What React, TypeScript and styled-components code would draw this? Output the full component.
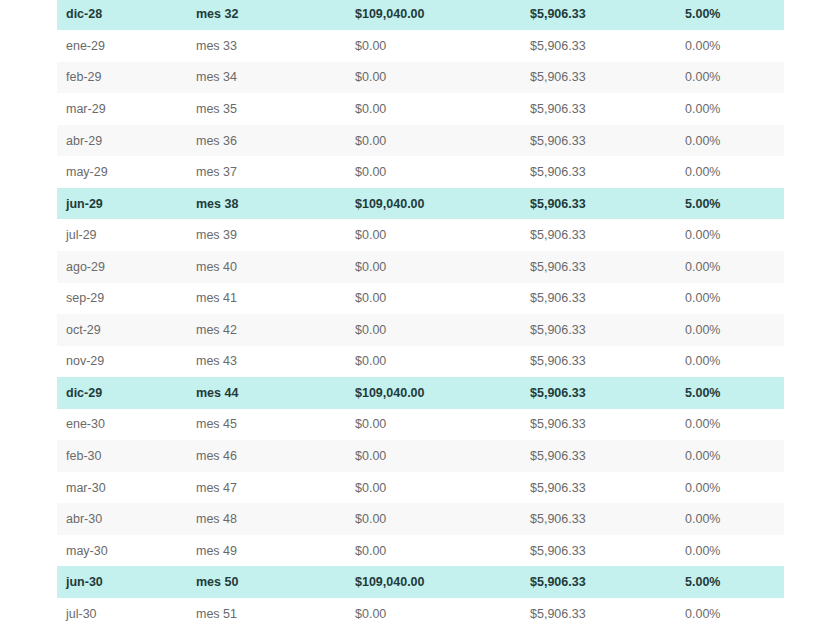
import { FC } from 'react';

import styled, { createGlobalStyle, css } from 'styled-components';

const GlobalStyle = createGlobalStyle`
  html, body {
    margin: 0;
    padding: 0;
    background: #ffffff;
  }

  body {
    font-family: 'Liberation Sans', Arial, sans-serif;
  }
`;

const StyledPage = styled.div`
  width: 840px;
  height: 630px;
  overflow: hidden;
  padding: 0 56px 0 57px;
  box-sizing: border-box;
`;

const StyledTable = styled.div`
  display: flex;
  flex-flow: column nowrap;
  margin-top: -1.4px;
`;

const StyledRow = styled.div<{ $highlight: boolean; $striped: boolean }>`
  ${({ $highlight, $striped }) => css`
    display: grid;
    grid-template-columns: 130px 159px 175px 155px 1fr;
    align-items: center;

    height: 31.56px;

    font-size: 12.5px;
    color: #6a6a6a;
    background-color: ${$striped ? '#f8f8f8' : '#ffffff'};

    ${$highlight &&
    css`
      font-weight: bold;
      color: #1f3b3a;
      background-color: #c4f0ed;
    `}
  `}
`;

const StyledCell = styled.div`
  padding-left: 9px;
  white-space: nowrap;
`;

interface IRow {
  date: string;
  month: number;
}

const months = ['ene', 'feb', 'mar', 'abr', 'may', 'jun', 'jul', 'ago', 'sep', 'oct', 'nov', 'dic'];

const rows: IRow[] = Array.from({ length: 20 }, (_, i) => {
  const index = 11 + i;
  const year = 28 + Math.floor(index / 12);
  return { date: `${months[index % 12]}-${year}`, month: 32 + i };
});

const App: FC = () => {
  return (
    <>
      <GlobalStyle />
      <StyledPage>
        <StyledTable>
          {rows.map((row, i) => {
            const highlight = (row.month - 32) % 6 === 0;
            return (
              <StyledRow key={row.month} $highlight={highlight} $striped={i % 2 === 0}>
                <StyledCell>{row.date}</StyledCell>
                <StyledCell>mes {row.month}</StyledCell>
                <StyledCell>{highlight ? '$109,040.00' : '$0.00'}</StyledCell>
                <StyledCell>$5,906.33</StyledCell>
                <StyledCell>{highlight ? '5.00%' : '0.00%'}</StyledCell>
              </StyledRow>
            );
          })}
        </StyledTable>
      </StyledPage>
    </>
  );
};

export default App;
